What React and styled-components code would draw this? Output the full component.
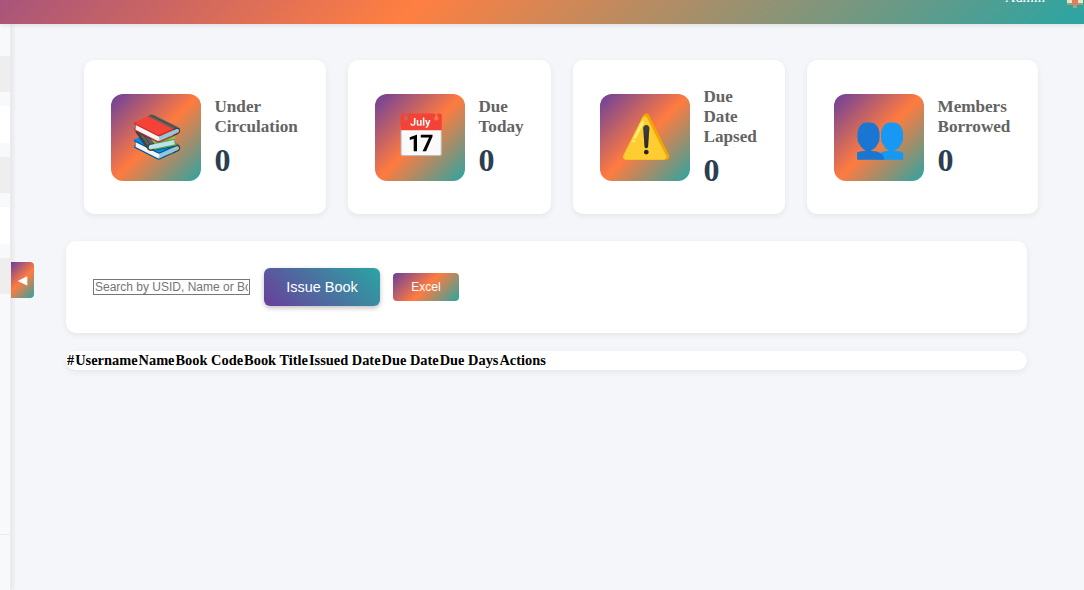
import React from 'react'
import styled, { createGlobalStyle } from 'styled-components'

const BRAND_GRADIENT = 'linear-gradient(135deg, #6a3f9c 0%, #ff7b3f 50%, #2aa5a3 100%)'

const GlobalStyle = createGlobalStyle`
  html, body {
    margin: 0;
    height: 100%;
    background: #f4f6fa;
    font-family: "Liberation Serif", "Noto Color Emoji", serif;
    overflow: hidden;
  }
`

const Page = styled.div`
  width: 1084px;
  height: 590px;
  display: flex;
  flex-direction: column;
  position: relative;
  overflow: hidden;
`

const Topbar = styled.header`
  height: 24px;
  flex: none;
  display: flex;
  justify-content: flex-end;
  align-items: flex-start;
  overflow: hidden;
  background: linear-gradient(135deg, #a8547a 0%, #ff7f41 38%, #2aa5a3 100%);
  box-shadow: 0 2px 4px rgba(0, 0, 0, 0.08);
  position: relative;
  z-index: 2;
`

const AdminName = styled.span`
  color: #fff;
  font-size: 14.4px;
  line-height: 16px;
  margin-top: -11px;
  margin-right: 22px;
`

const Avatar = styled.svg`
  width: 16px;
  height: 8px;
  margin-right: 1px;
  flex: none;
`

const Body = styled.div`
  flex: 1;
  display: flex;
  min-height: 0;
`

const Sidebar = styled.aside`
  width: 10px;
  flex: none;
  background: #f8f9fb;
  border-right: 1px solid #ececec;
  box-shadow: 2px 0 4px rgba(0, 0, 0, 0.07);
  display: flex;
  flex-direction: column;
  padding-top: 32px;
`

const SideRow = styled.div`
  height: ${props => props.$height}px;
  margin-bottom: ${props => props.$gap}px;
  background: ${props => props.$tone};
  flex: none;
`

const SideRule = styled.div`
  height: 1px;
  background: #ececec;
  margin-top: 240px;
  flex: none;
`

const Toggle = styled.button`
  position: absolute;
  left: 11px;
  top: 262px;
  width: 23px;
  height: 36px;
  padding: 0;
  border: 0;
  border-radius: 0 4px 4px 0;
  background: ${BRAND_GRADIENT};
  color: #fff;
  font-family: "Liberation Sans", sans-serif;
  font-size: 12px;
  line-height: 36px;
  text-align: center;
`

const Main = styled.main`
  flex: 1;
  min-width: 0;
  padding: 36px 57px 0 55px;
  box-sizing: border-box;
`

const StatRow = styled.section`
  display: flex;
  gap: 22px;
  margin: 0 -11px 27px 18px;
`

const StatCard = styled.article`
  flex: none;
  width: ${props => props.$width}px;
  height: 154px;
  box-sizing: border-box;
  padding: 0 27px;
  display: flex;
  align-items: center;
  gap: 13.5px;
  background: #fff;
  border-radius: 10px;
  box-shadow: 0 2px 6px rgba(0, 0, 0, 0.07);
`

const IconTile = styled.div`
  width: 90px;
  height: 87px;
  box-sizing: border-box;
  padding-left: 3px;
  flex: none;
  border-radius: 12px;
  background: ${BRAND_GRADIENT};
  display: flex;
  align-items: center;
  justify-content: center;
  font-family: "Noto Color Emoji", sans-serif;
  font-size: 42px;
  line-height: 1;
`

const StatText = styled.div`
  padding-top: 1px;
`

const StatLabel = styled.h3`
  margin: 0;
  font-size: 17.12px;
  line-height: 20px;
  font-weight: 700;
  color: #636363;
`

const StatValue = styled.div`
  margin-top: 5px;
  font-size: 32px;
  line-height: 37px;
  font-weight: 700;
  color: #2c3e50;
`

const FilterBar = styled.section`
  height: 92px;
  box-sizing: border-box;
  padding: 0 27px;
  display: flex;
  align-items: center;
  background: #fff;
  border-radius: 10px;
  box-shadow: 0 2px 6px rgba(0, 0, 0, 0.07);
  margin-bottom: 18px;
`

const SearchInput = styled.input`
  width: 157px;
  height: 16px;
  box-sizing: border-box;
  padding: 1px;
  border: 1px solid #767676;
  border-radius: 0;
  font-family: "Liberation Sans", sans-serif;
  font-size: 12px;
  margin-right: 14px;
  background: #fff;

  &::placeholder {
    color: #757575;
    opacity: 1;
  }
`

const IssueButton = styled.button`
  width: 116px;
  height: 38px;
  border: 0;
  border-radius: 6px;
  background: linear-gradient(45deg, #6a3f9c 0%, #2aa5a3 100%);
  box-shadow: 0 2px 5px rgba(0, 0, 0, 0.25);
  color: #fff;
  font-family: "Liberation Sans", sans-serif;
  font-size: 14.5px;
  margin-right: 13px;
`

const ExcelButton = styled.button`
  width: 66px;
  height: 28px;
  border: 0;
  border-radius: 4px;
  background: ${BRAND_GRADIENT};
  color: #fff;
  font-family: "Liberation Sans", sans-serif;
  font-size: 12px;
`

const TableWrap = styled.div`
  background: #fff;
  border-radius: 10px;
  box-shadow: 0 2px 6px rgba(0, 0, 0, 0.07);
  overflow: hidden;
`

const Table = styled.table`
  border-collapse: collapse;
`

const HeadCell = styled.th`
  padding: 0 1px 0 0;
  font-size: 14.4px;
  line-height: 19px;
  font-weight: 700;
  color: #000;
  text-align: left;
  white-space: nowrap;

  &:first-child {
    padding-left: 1px;
  }
`

const sideRows = [
  { height: 36, gap: 14, tone: '#eeeeee' },
  { height: 37, gap: 14, tone: '#ffffff' },
  { height: 36, gap: 14, tone: '#eeeeee' },
  { height: 37, gap: 14, tone: '#ffffff' },
  { height: 36, gap: 0, tone: '#eeeeee' }
]

const stats = [
  { label: 'Under Circulation', icon: '📚', width: 242 },
  { label: 'Due Today', icon: '📅', width: 203 },
  { label: 'Due Date Lapsed', icon: '⚠️', width: 212 },
  { label: 'Members Borrowed', icon: '👥', width: 231 }
]

const columns = ['#', 'Username', 'Name', 'Book Code', 'Book Title', 'Issued Date', 'Due Date', 'Due Days', 'Actions']

export default function App() {
  return (
    <Page>
      <GlobalStyle />
      <Topbar>
        <AdminName>Admin</AdminName>
        <Avatar viewBox="0 0 16 8">
          <rect x="0" y="0" width="16" height="3" fill="#e9e2cf" />
          <rect x="0" y="3" width="5" height="2" fill="#9aa56a" />
          <rect x="11" y="3" width="5" height="2" fill="#9aa56a" />
          <rect x="5" y="0" width="6" height="5" fill="#d9825a" />
          <rect x="6" y="5" width="4" height="3" fill="#a0a0a0" />
        </Avatar>
      </Topbar>
      <Body>
        <Sidebar>
          {sideRows.map((row, i) => (
            <SideRow key={i} $height={row.height} $gap={row.gap} $tone={row.tone} />
          ))}
          <SideRule />
        </Sidebar>
        <Toggle aria-label="Collapse sidebar">◀</Toggle>
        <Main>
          <StatRow>
            {stats.map(stat => (
              <StatCard key={stat.label} $width={stat.width}>
                <IconTile>{stat.icon}</IconTile>
                <StatText>
                  <StatLabel>{stat.label}</StatLabel>
                  <StatValue>0</StatValue>
                </StatText>
              </StatCard>
            ))}
          </StatRow>
          <FilterBar>
            <SearchInput placeholder="Search by USID, Name or Book" />
            <IssueButton>Issue Book</IssueButton>
            <ExcelButton>Excel</ExcelButton>
          </FilterBar>
          <TableWrap>
            <Table>
              <thead>
                <tr>
                  {columns.map(col => <HeadCell key={col}>{col}</HeadCell>)}
                </tr>
              </thead>
            </Table>
          </TableWrap>
        </Main>
      </Body>
    </Page>
  )
}
